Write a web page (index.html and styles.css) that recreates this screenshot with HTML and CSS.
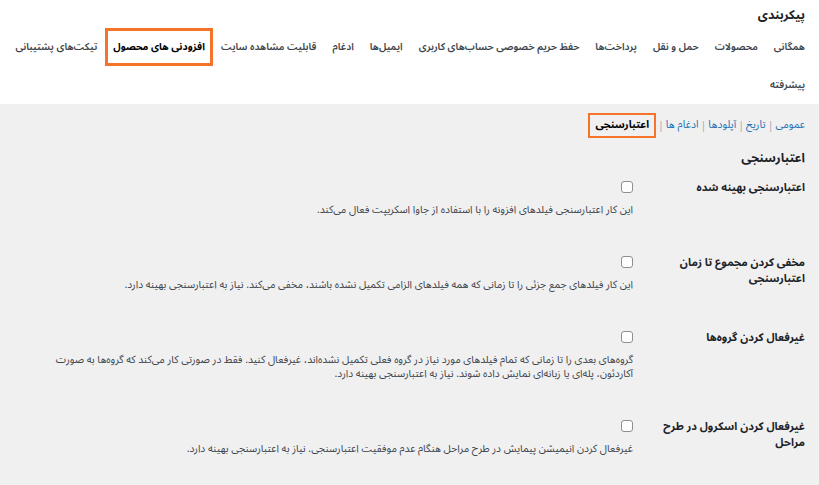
FILE: index.html
```html
<!DOCTYPE html>
<html lang="fa" dir="rtl">
<head>
<meta charset="utf-8">
<title>پیکربندی</title>
<link rel="stylesheet" href="styles.css">
</head>
<body>
<header class="top">
  <h1 class="title">پیکربندی</h1>
  <nav class="tabs">
    <a class="tab">همگانی</a>
    <a class="tab">محصولات</a>
    <a class="tab">حمل و نقل</a>
    <a class="tab">پرداخت‌ها</a>
    <a class="tab">حفظ حریم خصوصی حساب‌های کاربری</a>
    <a class="tab">ایمیل‌ها</a>
    <a class="tab">ادغام</a>
    <a class="tab">قابلیت مشاهده سایت</a>
    <a class="tab active">افزودنی های محصول</a>
    <a class="tab">تیکت‌های پشتیبانی</a>
    <a class="tab">پیشرفته</a>
  </nav>
</header>
<main class="content">
  <ul class="subnav">
    <li><a class="sublink">عمومی</a></li>
    <li class="sep">|</li>
    <li><a class="sublink">تاریخ</a></li>
    <li class="sep">|</li>
    <li><a class="sublink">آپلودها</a></li>
    <li class="sep">|</li>
    <li><a class="sublink">ادغام ها</a></li>
    <li class="sep">|</li>
    <li><a class="sublink current">اعتبارسنجی</a></li>
  </ul>
  <h2 class="heading">اعتبارسنجی</h2>
  <div class="form">
    <div class="row">
      <div class="label">اعتبارسنجی بهینه شده</div>
      <div class="field">
        <span class="check"></span>
        <p class="desc">این کار اعتبارسنجی فیلدهای افزونه را با استفاده از جاوا اسکریپت فعال می‌کند.</p>
      </div>
    </div>
    <div class="row">
      <div class="label">مخفی کردن مجموع تا زمان اعتبارسنجی</div>
      <div class="field">
        <span class="check"></span>
        <p class="desc">این کار فیلدهای جمع جزئی را تا زمانی که همه فیلدهای الزامی تکمیل نشده باشند، مخفی می‌کند. نیاز به اعتبارسنجی بهینه دارد.</p>
      </div>
    </div>
    <div class="row">
      <div class="label">غیرفعال کردن گروه‌ها</div>
      <div class="field">
        <span class="check"></span>
        <p class="desc">گروه‌های بعدی را تا زمانی که تمام فیلدهای مورد نیاز در گروه فعلی تکمیل نشده‌اند، غیرفعال کنید. فقط در صورتی کار می‌کند که گروه‌ها به صورت آکاردئون، پله‌ای یا زبانه‌ای نمایش داده شوند. نیاز به اعتبارسنجی بهینه دارد.</p>
      </div>
    </div>
    <div class="row">
      <div class="label">غیرفعال کردن اسکرول در طرح مراحل</div>
      <div class="field">
        <span class="check"></span>
        <p class="desc">غیرفعال کردن انیمیشن پیمایش در طرح مراحل هنگام عدم موفقیت اعتبارسنجی. نیاز به اعتبارسنجی بهینه دارد.</p>
      </div>
    </div>
  </div>
</main>
</body>
</html>
```
FILE: styles.css
```css
* { box-sizing: border-box; }
html, body { margin: 0; padding: 0; }
body {
  direction: rtl;
  background: #f0f0f1;
  color: #1d2327;
  font-family: "Noto Sans Arabic", "Vazirmatn", "DejaVu Sans", sans-serif;
  font-size: 11px;
  line-height: 16px;
}
.top {
  background: #ffffff;
  padding: 5px 14px 0 4px;
}
.title {
  margin: 0;
  font-size: 12.5px;
  font-weight: 700;
  line-height: 20px;
  color: #1d2327;
}
.tabs {
  display: flex;
  flex-wrap: wrap;
  margin-top: 3px;
  margin-right: -8px;
}
.tab {
  display: block;
  padding: 6px 5px;
  border: 3px solid transparent;
  color: #3c434a;
  font-size: 10px;
  font-weight: 600;
  line-height: 20px;
}
.tab.active {
  border-color: #f5742a;
  color: #000;
  font-weight: 700;
}
.content {
  padding: 9px 14px 20px 10px;
}
.subnav {
  list-style: none;
  margin: 0;
  padding: 0;
  display: flex;
  align-items: center;
  gap: 2px;
  font-size: 10.5px;
}
.sublink {
  display: block;
  color: #2271b1;
  line-height: 17px;
}
.sublink.current {
  color: #000;
  font-weight: 700;
  border: 2px solid #f5742a;
  padding: 2px 5px;
}
.sep { color: #a7aaad; }
.heading {
  margin: 10px 0 0;
  font-size: 12.5px;
  font-weight: 700;
  line-height: 20px;
}
.row {
  display: grid;
  grid-template-columns: 172px 1fr;
  padding: 13px 0 26px;
}
.label {
  font-weight: 700;
  padding-left: 22px;
  margin-top: -1px;
}
.field { display: flex; flex-direction: column; align-items: flex-start; }
.check {
  display: block;
  width: 12px;
  height: 12px;
  border: 1px solid #8c8f94;
  border-radius: 3px;
  background: #fff;
}
.desc {
  margin: 10px 0 0;
  color: #3c434a;
  font-size: 10.4px;
  line-height: 14px;
  max-width: 590px;
}
```
